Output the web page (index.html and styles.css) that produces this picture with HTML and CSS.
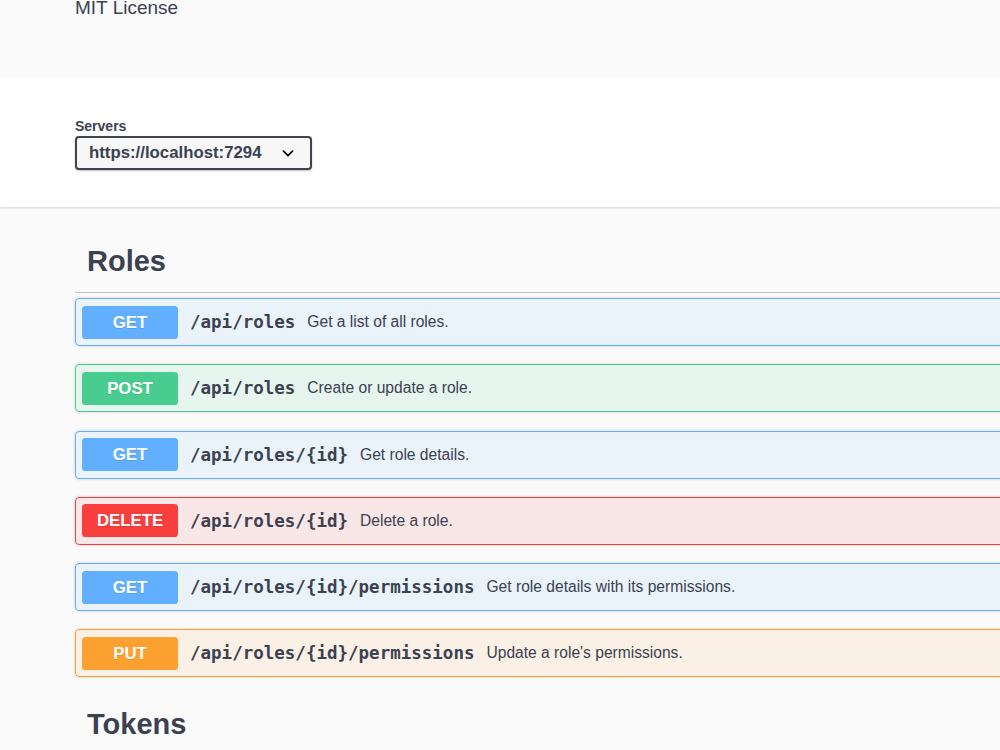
FILE: index.html
```html
<!DOCTYPE html>
<html lang="en">
  <head>
    <meta charset="UTF-8" />
    <meta name="viewport" content="width=device-width, initial-scale=1.0" />
    <title>Swagger UI</title>
    <link rel="stylesheet" href="styles.css">
  </head>
  <body>
    <div class="info-band">
      <div class="wrap">
        <p class="license">MIT License</p>
      </div>
    </div>

    <div class="scheme">
      <div class="wrap">
        <span class="servers-title">Servers</span>
        <div class="servers-select">
          <span>https://localhost:7294</span>
          <svg class="arrow" viewBox="0 0 20 20" width="24" height="24">
            <path d="M13.418 7.859a.695.695 0 01.978 0 .68.68 0 010 .969l-3.908 3.83a.697.697 0 01-.979 0l-3.908-3.83a.68.68 0 010-.969.695.695 0 01.978 0L10 11z" fill="#000"/>
          </svg>
        </div>
      </div>
    </div>

    <main class="wrap tags">
      <section class="tag-section">
        <div class="tag"><h3>Roles</h3></div>

        <div class="opblock get">
          <span class="method">GET</span>
          <span class="path">/api/roles</span>
          <span class="desc">Get a list of all roles.</span>
        </div>
        <div class="opblock post">
          <span class="method">POST</span>
          <span class="path">/api/roles</span>
          <span class="desc">Create or update a role.</span>
        </div>
        <div class="opblock get">
          <span class="method">GET</span>
          <span class="path">/api/roles/{id}</span>
          <span class="desc">Get role details.</span>
        </div>
        <div class="opblock delete">
          <span class="method">DELETE</span>
          <span class="path">/api/roles/{id}</span>
          <span class="desc">Delete a role.</span>
        </div>
        <div class="opblock get">
          <span class="method">GET</span>
          <span class="path">/api/roles/{id}/permissions</span>
          <span class="desc">Get role details with its permissions.</span>
        </div>
        <div class="opblock put">
          <span class="method">PUT</span>
          <span class="path">/api/roles/{id}/permissions</span>
          <span class="desc">Update a role's permissions.</span>
        </div>
      </section>

      <section class="tag-section">
        <div class="tag"><h3>Tokens</h3></div>
      </section>
    </main>
  </body>
</html>
```

FILE: styles.css
```css
html {
  background-color: #fafafa;
}

body {
  margin: 0;
  overflow: hidden;
  font-family: "Liberation Sans", Arial, sans-serif;
  color: #3b4151;
}

.wrap {
  margin-left: 75px;
  width: 1500px;
}

/* info */
.info-band {
  display: flow-root;
  height: 78px;
  background-color: #fafafa;
}

.license {
  margin: -2px 0 0 0;
  font-size: 19px;
  line-height: 19px;
}

/* servers */
.scheme {
  background-color: #fff;
  padding: 41px 0 37px 0;
  box-shadow: 0 1px 2px 0 rgba(0, 0, 0, 0.15);
  position: relative;
}

.servers-title {
  display: block;
  font-size: 14px;
  font-weight: bold;
  line-height: 14px;
  margin-bottom: 3px;
}

.servers-select {
  box-sizing: border-box;
  width: 237px;
  height: 34px;
  display: flex;
  align-items: center;
  justify-content: space-between;
  padding: 0 10px 0 12px;
  border: 2px solid #41444e;
  border-radius: 4px;
  background-color: #f7f7f7;
  box-shadow: 0 1px 2px 0 rgba(0, 0, 0, 0.25);
  font-size: 16.8px;
  font-weight: bold;
}

/* tags */
.tags {
  padding-top: 26px;
}

.tag-section {
  margin-bottom: 2px;
}

.tag {
  padding: 12px 12px 14px 12px;
  border-bottom: 1px solid rgba(59, 65, 81, 0.3);
  margin-bottom: 5px;
}

.tag h3 {
  margin: 0;
  font-size: 29px;
  line-height: 33px;
  font-weight: bold;
}

/* operations */
.opblock {
  box-sizing: border-box;
  height: 48px;
  display: flex;
  align-items: center;
  padding: 0 6px;
  margin-bottom: 18.3px;
  border: 1px solid #000;
  border-radius: 4px;
  box-shadow: 0 0 3px rgba(0, 0, 0, 0.19);
}

.method {
  width: 96px;
  height: 33px;
  line-height: 33px;
  text-align: center;
  border-radius: 3.6px;
  color: #fff;
  font-size: 16.8px;
  font-weight: bold;
  text-shadow: 0 1px 0 rgba(0, 0, 0, 0.1);
}

.path {
  padding: 0 12px;
  font-family: "DejaVu Sans Mono", monospace;
  font-size: 17.5px;
  font-weight: bold;
}

.desc {
  font-size: 15.6px;
}

.get {
  border-color: #61affe;
  background-color: rgba(97, 175, 254, 0.1);
}
.get .method {
  background-color: #61affe;
}

.post {
  border-color: #49cc90;
  background-color: rgba(73, 204, 144, 0.1);
}
.post .method {
  background-color: #49cc90;
}

.delete {
  border-color: #f93e3e;
  background-color: rgba(249, 62, 62, 0.1);
}
.delete .method {
  background-color: #f93e3e;
}

.put {
  border-color: #fca130;
  background-color: rgba(252, 161, 48, 0.1);
}
.put .method {
  background-color: #fca130;
}
```
